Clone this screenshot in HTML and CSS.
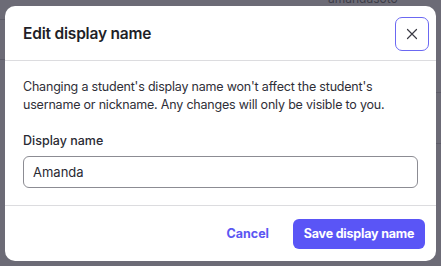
FILE: index.html
```html
<!DOCTYPE html>
<html>
<head>
    <meta charset="utf-8">
    <meta name="viewport" content="width=device-width, initial-scale=1.0">
    <title>Edit display name</title>
    <link rel="stylesheet" href="styles.css">
</head>
<body>
    <div class="backdrop">
        <div class="bg-name">amandasoto</div>
        <div class="bg-line line-a"></div>
        <div class="bg-line line-b"></div>
        <div class="bg-line line-c"></div>
        <div class="bg-line line-d"></div>
    </div>

    <div class="modal">
        <div class="modal-header">
            <h2>Edit display name</h2>
            <button class="close-btn" title="Close">
                <svg viewBox="0 0 24 24" fill="none" stroke="currentColor" stroke-width="1.6" stroke-linecap="round">
                    <path d="M6 6l12 12M18 6L6 18"></path>
                </svg>
            </button>
        </div>
        <div class="modal-body">
            <p>Changing a student's display name won't affect the student's username or nickname. Any changes will only be visible to you.</p>
            <label for="displayName">Display name</label>
            <input type="text" id="displayName" value="Amanda" autocomplete="off">
        </div>
        <div class="modal-footer">
            <button class="btn-link">Cancel</button>
            <button class="btn-primary">Save display name</button>
        </div>
    </div>
</body>
</html>
```

FILE: styles.css
```css
html, body {
    margin: 0;
    height: 100%;
}
body {
    background: #6c6b76;
    font-family: Inter, "Noto Sans", sans-serif;
    color: #2b2b33;
    position: relative;
    overflow: hidden;
}
.backdrop {
    position: absolute;
    inset: 0;
}
.bg-name {
    position: absolute;
    left: 328px;
    top: -9px;
    font-size: 12px;
    color: #3d3d48;
}
.bg-line {
    position: absolute;
    height: 1px;
    background: #5d5c68;
}
.line-a { left: 0; width: 10px; top: 19px; }
.line-b { left: 0; width: 10px; top: 59px; }
.line-c { right: 0; width: 10px; top: 92px; }
.line-d { right: 0; width: 10px; top: 143px; }
.modal {
    position: absolute;
    left: 5px;
    top: 6px;
    width: 431px;
    height: 255px;
    background: #fff;
    border-radius: 10px;
    display: flex;
    flex-direction: column;
    box-sizing: border-box;
}
.modal-header {
    display: flex;
    align-items: center;
    justify-content: space-between;
    height: 54px;
    padding: 0 7px 0 18px;
    border-bottom: 1px solid #dcdcdf;
}
.modal-header h2 {
    margin: 0;
    font-size: 15.5px;
    font-weight: 600;
    color: #1f1f28;
    letter-spacing: -0.2px;
}
.close-btn {
    width: 34px;
    height: 34px;
    padding: 0;
    border: 1px solid #6b68f2;
    border-radius: 7px;
    background: #fff;
    color: #3a3a44;
    display: flex;
    align-items: center;
    justify-content: center;
    margin-top: 1px;
}
.close-btn svg {
    width: 18px;
    height: 18px;
}
.modal-body {
    padding: 17px 18px 0 18px;
    height: 145px;
    box-sizing: border-box;
    border-bottom: 1px solid #dcdcdf;
}
.modal-body p {
    margin: 0 0 19px 0;
    font-size: 12.5px;
    line-height: 18px;
    color: #2f2f38;
    letter-spacing: -0.2px;
}
.modal-body label {
    display: block;
    font-size: 12.5px;
    line-height: 15px;
    font-weight: 500;
    color: #2a2a33;
    margin-bottom: 8px;
}
.modal-body input {
    width: 100%;
    height: 32px;
    box-sizing: border-box;
    border: 1px solid #8c8c93;
    border-radius: 6px;
    padding: 0 9px;
    font-family: inherit;
    font-size: 13px;
    color: #2a2a33;
}
.modal-footer {
    flex: 1;
    display: flex;
    align-items: center;
    justify-content: flex-end;
    padding: 0 11px 0 18px;
    gap: 24px;
}
.btn-link {
    border: none;
    background: none;
    padding: 0;
    font-family: inherit;
    font-size: 12.5px;
    font-weight: 700;
    color: #5b57f2;
}
.btn-primary {
    border: none;
    background: #5a55f6;
    color: #fff;
    height: 30px;
    width: 132px;
    border-radius: 6px;
    font-family: inherit;
    font-size: 12.5px;
    font-weight: 700;
    letter-spacing: -0.2px;
}
```
